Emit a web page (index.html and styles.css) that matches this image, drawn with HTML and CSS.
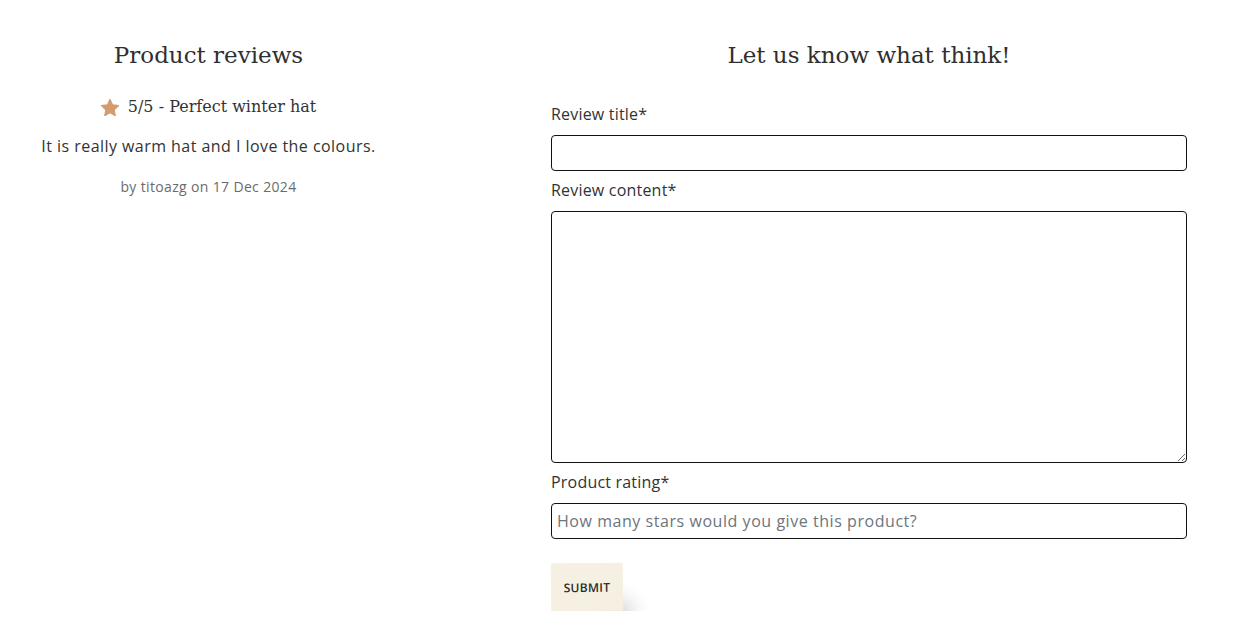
FILE: index.html
```html
<!DOCTYPE html>
<html lang="en">
<head>
<meta charset="utf-8">
<title>Product reviews</title>
<link rel="stylesheet" href="styles.css">
</head>
<body>
<main class="page">
  <section class="reviews">
    <h2 class="heading">Product reviews</h2>
    <div class="review">
      <p class="review-title">
        <svg class="star" viewBox="1.5 1.5 21 20" width="18" height="17" aria-hidden="true"><path d="M12 1.8l3.1 6.6 7.1.9-5.2 4.9 1.3 7.1L12 17.8l-6.3 3.5 1.3-7.1L1.8 9.3l7.1-.9z" stroke="#d39b6f" stroke-width="1.2" stroke-linejoin="round"/></svg>
        <span>5/5 - Perfect winter hat</span>
      </p>
      <p class="review-text">It is really warm hat and I love the colours.</p>
      <p class="review-meta">by titoazg on 17 Dec 2024</p>
    </div>
  </section>
  <section class="form-col">
    <h2 class="heading">Let us know what think!</h2>
    <form class="form">
      <label class="label" for="title">Review title*</label>
      <input class="field" id="title" type="text">
      <label class="label" for="content">Review content*</label>
      <textarea class="field area" id="content"></textarea>
      <label class="label" for="rating">Product rating*</label>
      <input class="field" id="rating" type="text" placeholder="How many stars would you give this product?">
      <div class="actions">
        <button class="submit" type="button">SUBMIT</button>
      </div>
    </form>
  </section>
</main>
</body>
</html>
```
FILE: styles.css
```css
* { box-sizing: border-box; }
html, body { margin: 0; padding: 0; background: #fff; }
body {
  font-family: "Open Sans", "Liberation Sans", sans-serif;
  color: #333;
}
.page {
  display: grid;
  grid-template-columns: 417px 636px;
  column-gap: 134px;
  padding-top: 38px;
}
.heading {
  font-family: "DejaVu Serif", serif;
  font-weight: 400;
  font-size: 23px;
  line-height: 34px;
  margin: 0;
  text-align: center;
  color: #2f2f2f;
}
.reviews { text-align: center; }
.review { padding-top: 23px; }
.review-title {
  margin: 0;
  display: flex;
  justify-content: center;
  align-items: center;
  gap: 9px;
  font-family: "DejaVu Serif", serif;
  font-size: 16px;
  line-height: 24px;
  color: #333;
}
.star { fill: #d39b6f; display: block; }
.review-text {
  margin: 15px 0 0;
  font-size: 16px;
  line-height: 24px;
  letter-spacing: 0.45px;
  color: #333;
}
.review-meta {
  margin: 19px 0 0;
  font-size: 14px;
  line-height: 20px;
  color: #6b6b6b;
  letter-spacing: 0.35px;
}
.form { display: flex; flex-direction: column; padding-top: 30px; }
.label {
  font-size: 16px;
  line-height: 24px;
  color: #333;
  letter-spacing: 0.2px;
}
.field {
  display: block;
  width: 100%;
  height: 36px;
  margin: 9px 0 7px;
  border: 1px solid #111;
  border-radius: 4px;
  padding: 4px 5px;
  font-family: "Open Sans", "Liberation Sans", sans-serif;
  font-size: 16px;
  color: #333;
  background: #fff;
  outline: none;
}
.field::placeholder { color: #6c757d; opacity: 1; letter-spacing: 0.55px; }
.area { height: 252px; resize: vertical; }
.actions { padding-top: 17px; }
.submit {
  width: 72px;
  height: 48px;
  border: none;
  border-radius: 1px;
  background: #f5f0e1;
  font-family: "Open Sans", "Liberation Sans", sans-serif;
  font-size: 12px;
  font-weight: 600;
  letter-spacing: 0.3px;
  color: #2b2b2b;
  padding: 0;
  box-shadow: 18px 28px 20px -10px rgba(0,0,0,0.18);
  transform: rotate(-0.6deg);
}
```
